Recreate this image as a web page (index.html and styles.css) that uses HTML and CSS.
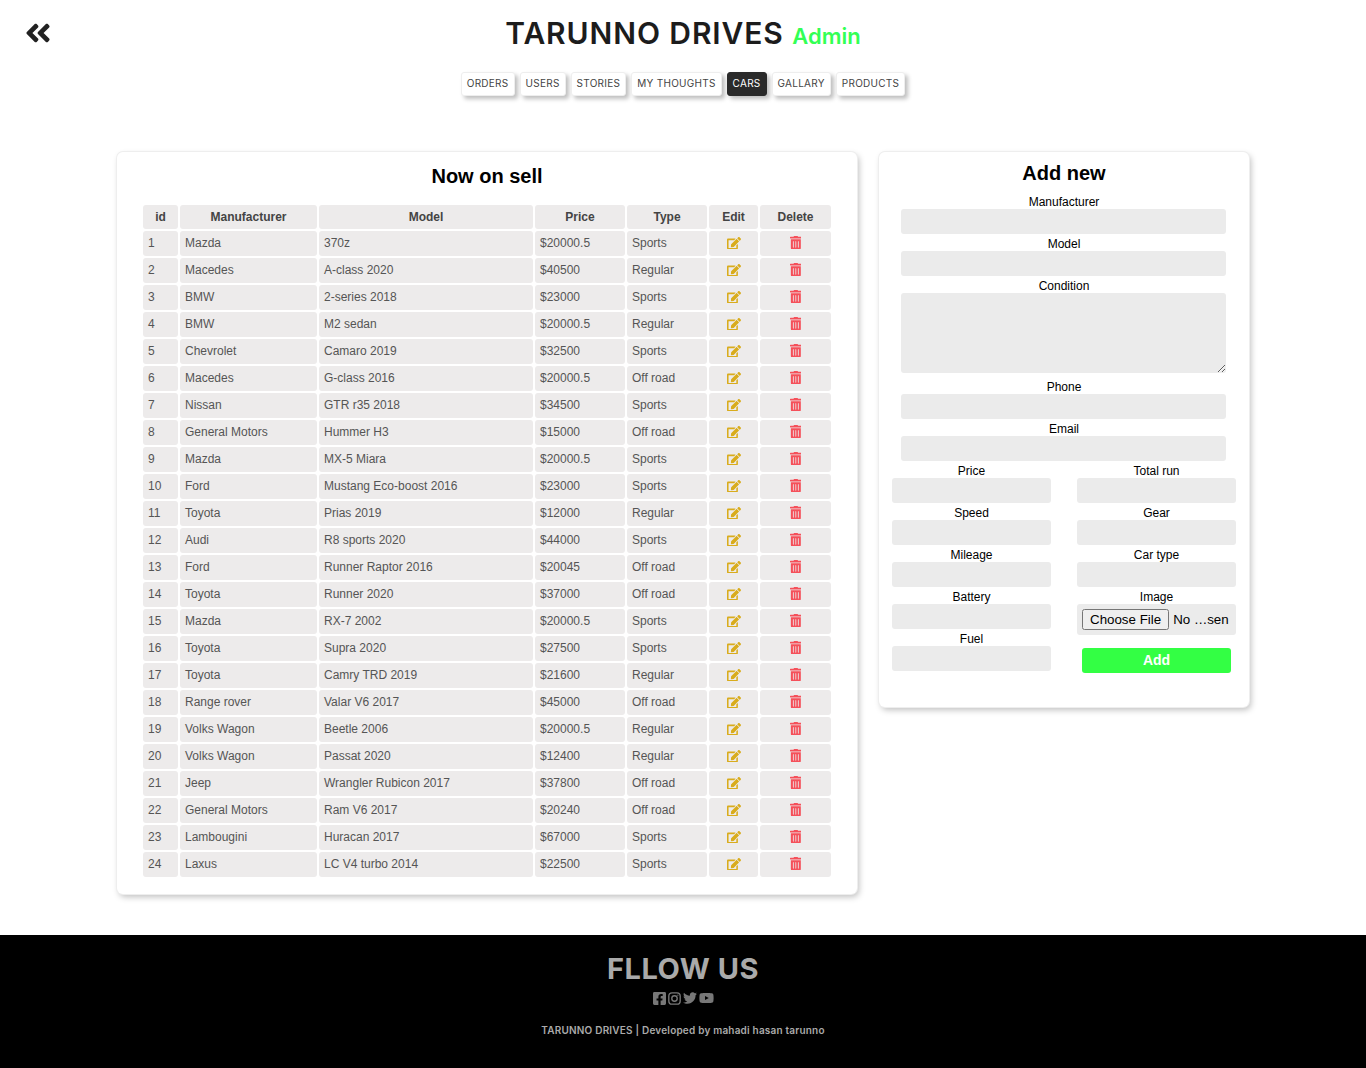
FILE: index.html
```html
<!doctype html>
<html>
<head>
	<title>Cars | Tarunno Drives Admin</title>
	<meta charset="utf-8">
	<link rel="stylesheet" href="styles.css">
</head>

<body>
	<svg class="sprite" xmlns="http://www.w3.org/2000/svg">
		<symbol id="i-edit" viewBox="0 0 576 512"><path d="M402.6 83.2l90.2 90.2c3.8 3.8 3.8 10 0 13.8L274.4 405.6l-92.8 10.3c-12.4 1.4-22.9-9.1-21.5-21.5l10.3-92.8L388.8 83.2c3.8-3.8 10-3.8 13.8 0zm162-22.9l-48.8-48.8c-15.2-15.2-39.9-15.2-55.2 0l-35.4 35.4c-3.8 3.8-3.8 10 0 13.8l90.2 90.2c3.8 3.8 10 3.8 13.8 0l35.4-35.4c15.2-15.3 15.2-40 0-55.2zM384 346.2V448H64V128h229.8c3.2 0 6.2-1.3 8.5-3.5l40-40c7.6-7.6 2.2-20.5-8.5-20.5H48C21.5 64 0 85.5 0 112v352c0 26.5 21.5 48 48 48h352c26.5 0 48-21.5 48-48V306.2c0-10.7-12.9-16-20.5-8.5l-40 40c-2.2 2.3-3.5 5.3-3.5 8.5z"/></symbol>
		<symbol id="i-trash" viewBox="0 0 448 512"><path d="M32 464a48 48 0 0 0 48 48h288a48 48 0 0 0 48-48V128H32zm272-256a16 16 0 0 1 32 0v224a16 16 0 0 1-32 0zm-96 0a16 16 0 0 1 32 0v224a16 16 0 0 1-32 0zm-96 0a16 16 0 0 1 32 0v224a16 16 0 0 1-32 0zM432 32H312l-9.4-18.7A24 24 0 0 0 281.1 0H166.8a23.72 23.72 0 0 0-21.4 13.3L136 32H16A16 16 0 0 0 0 48v32a16 16 0 0 0 16 16h416a16 16 0 0 0 16-16V48a16 16 0 0 0-16-16z"/></symbol>
	</svg>

	<header class="top">
		<a href="#" class="back" aria-label="Back">
			<svg viewBox="0 0 448 512" width="26" height="30"><path d="M223.7 239l136-136c9.4-9.4 24.6-9.4 33.9 0l22.6 22.6c9.4 9.4 9.4 24.6 0 33.9L319.9 256l96.4 96.4c9.4 9.4 9.4 24.6 0 33.9L393.7 409c-9.4 9.4-24.6 9.4-33.9 0l-136-136c-9.5-9.4-9.5-24.6-.1-34zm-192 34l136 136c9.4 9.4 24.6 9.4 33.9 0l22.6-22.6c9.4-9.4 9.4-24.6 0-33.9L127.9 256l96.4-96.4c9.4-9.4 9.4-24.6 0-33.9L201.7 103c-9.4-9.4-24.6-9.4-33.9 0l-136 136c-9.5 9.4-9.5 24.6-.1 34z"/></svg>
		</a>
		<h1 class="brand">TARUNNO DRIVES <span class="brand-role">Admin</span></h1>
		<nav class="tabs">
			<a href="#" class="tab">ORDERS</a>
			<a href="#" class="tab">USERS</a>
			<a href="#" class="tab">STORIES</a>
			<a href="#" class="tab">MY THOUGHTS</a>
			<a href="#" class="tab tab-active">CARS</a>
			<a href="#" class="tab">GALLARY</a>
			<a href="#" class="tab">PRODUCTS</a>
		</nav>
	</header>

	<main class="panels">
		<section class="card card-list">
			<h2 class="card-title">Now on sell</h2>
			<table class="cars">
				<colgroup>
					<col class="col-id"><col class="col-maker"><col class="col-model"><col class="col-price"><col class="col-type"><col class="col-edit"><col class="col-del">
				</colgroup>
				<thead>
					<tr><th>id</th><th>Manufacturer</th><th>Model</th><th>Price</th><th>Type</th><th>Edit</th><th>Delete</th></tr>
				</thead>
				<tbody>
					<tr><td>1</td><td>Mazda</td><td>370z</td><td>$20000.5</td><td>Sports</td><td class="op"><svg class="ic-edit"><use href="#i-edit"/></svg></td><td class="op"><svg class="ic-trash"><use href="#i-trash"/></svg></td></tr>
					<tr><td>2</td><td>Macedes</td><td>A-class 2020</td><td>$40500</td><td>Regular</td><td class="op"><svg class="ic-edit"><use href="#i-edit"/></svg></td><td class="op"><svg class="ic-trash"><use href="#i-trash"/></svg></td></tr>
					<tr><td>3</td><td>BMW</td><td>2-series 2018</td><td>$23000</td><td>Sports</td><td class="op"><svg class="ic-edit"><use href="#i-edit"/></svg></td><td class="op"><svg class="ic-trash"><use href="#i-trash"/></svg></td></tr>
					<tr><td>4</td><td>BMW</td><td>M2 sedan</td><td>$20000.5</td><td>Regular</td><td class="op"><svg class="ic-edit"><use href="#i-edit"/></svg></td><td class="op"><svg class="ic-trash"><use href="#i-trash"/></svg></td></tr>
					<tr><td>5</td><td>Chevrolet</td><td>Camaro 2019</td><td>$32500</td><td>Sports</td><td class="op"><svg class="ic-edit"><use href="#i-edit"/></svg></td><td class="op"><svg class="ic-trash"><use href="#i-trash"/></svg></td></tr>
					<tr><td>6</td><td>Macedes</td><td>G-class 2016</td><td>$20000.5</td><td>Off road</td><td class="op"><svg class="ic-edit"><use href="#i-edit"/></svg></td><td class="op"><svg class="ic-trash"><use href="#i-trash"/></svg></td></tr>
					<tr><td>7</td><td>Nissan</td><td>GTR r35 2018</td><td>$34500</td><td>Sports</td><td class="op"><svg class="ic-edit"><use href="#i-edit"/></svg></td><td class="op"><svg class="ic-trash"><use href="#i-trash"/></svg></td></tr>
					<tr><td>8</td><td>General Motors</td><td>Hummer H3</td><td>$15000</td><td>Off road</td><td class="op"><svg class="ic-edit"><use href="#i-edit"/></svg></td><td class="op"><svg class="ic-trash"><use href="#i-trash"/></svg></td></tr>
					<tr><td>9</td><td>Mazda</td><td>MX-5 Miara</td><td>$20000.5</td><td>Sports</td><td class="op"><svg class="ic-edit"><use href="#i-edit"/></svg></td><td class="op"><svg class="ic-trash"><use href="#i-trash"/></svg></td></tr>
					<tr><td>10</td><td>Ford</td><td>Mustang Eco-boost 2016</td><td>$23000</td><td>Sports</td><td class="op"><svg class="ic-edit"><use href="#i-edit"/></svg></td><td class="op"><svg class="ic-trash"><use href="#i-trash"/></svg></td></tr>
					<tr><td>11</td><td>Toyota</td><td>Prias 2019</td><td>$12000</td><td>Regular</td><td class="op"><svg class="ic-edit"><use href="#i-edit"/></svg></td><td class="op"><svg class="ic-trash"><use href="#i-trash"/></svg></td></tr>
					<tr><td>12</td><td>Audi</td><td>R8 sports 2020</td><td>$44000</td><td>Sports</td><td class="op"><svg class="ic-edit"><use href="#i-edit"/></svg></td><td class="op"><svg class="ic-trash"><use href="#i-trash"/></svg></td></tr>
					<tr><td>13</td><td>Ford</td><td>Runner Raptor 2016</td><td>$20045</td><td>Off road</td><td class="op"><svg class="ic-edit"><use href="#i-edit"/></svg></td><td class="op"><svg class="ic-trash"><use href="#i-trash"/></svg></td></tr>
					<tr><td>14</td><td>Toyota</td><td>Runner 2020</td><td>$37000</td><td>Off road</td><td class="op"><svg class="ic-edit"><use href="#i-edit"/></svg></td><td class="op"><svg class="ic-trash"><use href="#i-trash"/></svg></td></tr>
					<tr><td>15</td><td>Mazda</td><td>RX-7 2002</td><td>$20000.5</td><td>Sports</td><td class="op"><svg class="ic-edit"><use href="#i-edit"/></svg></td><td class="op"><svg class="ic-trash"><use href="#i-trash"/></svg></td></tr>
					<tr><td>16</td><td>Toyota</td><td>Supra 2020</td><td>$27500</td><td>Sports</td><td class="op"><svg class="ic-edit"><use href="#i-edit"/></svg></td><td class="op"><svg class="ic-trash"><use href="#i-trash"/></svg></td></tr>
					<tr><td>17</td><td>Toyota</td><td>Camry TRD 2019</td><td>$21600</td><td>Regular</td><td class="op"><svg class="ic-edit"><use href="#i-edit"/></svg></td><td class="op"><svg class="ic-trash"><use href="#i-trash"/></svg></td></tr>
					<tr><td>18</td><td>Range rover</td><td>Valar V6 2017</td><td>$45000</td><td>Off road</td><td class="op"><svg class="ic-edit"><use href="#i-edit"/></svg></td><td class="op"><svg class="ic-trash"><use href="#i-trash"/></svg></td></tr>
					<tr><td>19</td><td>Volks Wagon</td><td>Beetle 2006</td><td>$20000.5</td><td>Regular</td><td class="op"><svg class="ic-edit"><use href="#i-edit"/></svg></td><td class="op"><svg class="ic-trash"><use href="#i-trash"/></svg></td></tr>
					<tr><td>20</td><td>Volks Wagon</td><td>Passat 2020</td><td>$12400</td><td>Regular</td><td class="op"><svg class="ic-edit"><use href="#i-edit"/></svg></td><td class="op"><svg class="ic-trash"><use href="#i-trash"/></svg></td></tr>
					<tr><td>21</td><td>Jeep</td><td>Wrangler Rubicon 2017</td><td>$37800</td><td>Off road</td><td class="op"><svg class="ic-edit"><use href="#i-edit"/></svg></td><td class="op"><svg class="ic-trash"><use href="#i-trash"/></svg></td></tr>
					<tr><td>22</td><td>General Motors</td><td>Ram V6 2017</td><td>$20240</td><td>Off road</td><td class="op"><svg class="ic-edit"><use href="#i-edit"/></svg></td><td class="op"><svg class="ic-trash"><use href="#i-trash"/></svg></td></tr>
					<tr><td>23</td><td>Lambougini</td><td>Huracan 2017</td><td>$67000</td><td>Sports</td><td class="op"><svg class="ic-edit"><use href="#i-edit"/></svg></td><td class="op"><svg class="ic-trash"><use href="#i-trash"/></svg></td></tr>
					<tr><td>24</td><td>Laxus</td><td>LC V4 turbo 2014</td><td>$22500</td><td>Sports</td><td class="op"><svg class="ic-edit"><use href="#i-edit"/></svg></td><td class="op"><svg class="ic-trash"><use href="#i-trash"/></svg></td></tr>
				</tbody>
			</table>
		</section>

		<section class="card card-form">
			<h2 class="card-title card-title-form">Add new</h2>
			<form class="car-form">
				<label class="field">Manufacturer<input type="text" class="input input-wide"></label>
				<label class="field">Model<input type="text" class="input input-wide"></label>
				<label class="field">Condition<textarea class="input input-wide input-area"></textarea></label>
				<label class="field">Phone<input type="text" class="input input-wide"></label>
				<label class="field">Email<input type="text" class="input input-wide"></label>
				<div class="split">
					<div class="split-col">
						<label class="field">Price<input type="text" class="input"></label>
						<label class="field">Speed<input type="text" class="input"></label>
						<label class="field">Mileage<input type="text" class="input"></label>
						<label class="field">Battery<input type="text" class="input"></label>
						<label class="field">Fuel<input type="text" class="input"></label>
					</div>
					<div class="split-col">
						<label class="field">Total run<input type="text" class="input"></label>
						<label class="field">Gear<input type="text" class="input"></label>
						<label class="field">Car type<input type="text" class="input"></label>
						<label class="field">Image<input type="file" class="input input-file"></label>
						<button type="button" class="btn-add">Add</button>
					</div>
				</div>
			</form>
		</section>
	</main>

	<footer class="foot">
		<h2 class="foot-title">FLLOW US</h2>
		<div class="foot-social">
			<svg viewBox="0 0 448 512" width="13" height="15"><path d="M400 32H48A48 48 0 0 0 0 80v352a48 48 0 0 0 48 48h137.25V327.69h-63V256h63v-54.64c0-62.15 37-96.48 93.67-96.48 27.14 0 55.52 4.84 55.52 4.84v61h-31.27c-30.81 0-40.42 19.12-40.42 38.73V256h68.78l-11 71.69h-57.78V480H400a48 48 0 0 0 48-48V80a48 48 0 0 0-48-48z"/></svg>
			<svg viewBox="0 0 24 24" width="13" height="13" class="ic-insta"><rect x="1.5" y="1.5" width="21" height="21" rx="6"/><circle cx="12" cy="12" r="5"/><circle cx="18.2" cy="5.8" r="1.2" class="ic-insta-dot"/></svg>
			<svg viewBox="0 0 512 512" width="14" height="14"><path d="M459.37 151.716c.325 4.548.325 9.097.325 13.645 0 138.72-105.583 298.558-298.558 298.558-59.452 0-114.68-17.219-161.137-47.106 8.447.974 16.568 1.299 25.34 1.299 49.055 0 94.213-16.568 130.274-44.832-46.132-.975-84.792-31.188-98.112-72.772 6.498.974 12.995 1.624 19.818 1.624 9.421 0 18.843-1.3 27.614-3.573-48.081-9.747-84.143-51.98-84.143-102.985v-1.299c13.969 7.797 30.214 12.67 47.431 13.319-28.264-18.843-46.781-51.005-46.781-87.391 0-19.492 5.197-37.36 14.294-52.954 51.655 63.675 129.3 105.258 216.365 109.807-1.624-7.797-2.599-15.918-2.599-24.04 0-57.828 46.782-104.934 104.934-104.934 30.213 0 57.502 12.67 76.67 33.137 23.715-4.548 46.456-13.32 66.599-25.34-7.798 24.366-24.366 44.833-46.132 57.827 21.117-2.273 41.584-8.122 60.426-16.243-14.292 20.791-32.161 39.308-52.628 54.253z"/></svg>
			<svg viewBox="0 0 576 512" width="15" height="14"><path d="M549.655 124.083c-6.281-23.65-24.787-42.276-48.284-48.597C458.781 64 288 64 288 64S117.22 64 74.629 75.486c-23.497 6.322-42.003 24.947-48.284 48.597-11.412 42.867-11.412 132.305-11.412 132.305s0 89.438 11.412 132.305c6.281 23.65 24.787 41.5 48.284 47.821C117.22 448 288 448 288 448s170.78 0 213.371-11.486c23.497-6.321 42.003-24.171 48.284-47.821 11.412-42.867 11.412-132.305 11.412-132.305s0-89.438-11.412-132.305zm-317.51 213.508V175.185l142.739 81.205-142.739 81.201z"/></svg>
		</div>
		<p class="foot-copy">TARUNNO DRIVES | Developed by mahadi hasan tarunno</p>
	</footer>
</body>
</html>
```

FILE: styles.css
```css
body, h1, h2, p {
	padding: 0;
	margin: 0;
}
body {
	font-family: "Liberation Sans", Arial, sans-serif;
	font-size: 12px;
	background: #fff;
	color: #000;
}
.sprite {
	display: none;
}

.top {
	position: relative;
	padding-top: 14px;
	text-align: center;
}
.back {
	position: absolute;
	left: 25px;
	top: 18px;
	color: #222;
}
.back svg {
	display: block;
	fill: currentColor;
}
.brand {
	height: 38px;
	line-height: 38px;
	font-family: Inter, sans-serif;
	font-size: 30px;
	font-weight: 600;
	letter-spacing: .9px;
	color: #1c1c1c;
}
.brand-role {
	font-size: 22px;
	font-weight: 600;
	letter-spacing: 0;
	color: #3f5;
}
.tabs {
	display: flex;
	justify-content: center;
	gap: 5px;
	margin-top: 20px;
}
.tab {
	height: 24px;
	padding: 0 5px;
	box-sizing: border-box;
	line-height: 20px;
	font-family: Inter, sans-serif;
	font-size: 10px;
	letter-spacing: .27px;
	text-decoration: none;
	color: #444;
	background: #fff;
	border: 1px solid #eee;
	border-radius: 3px;
	box-shadow: 3px 3px 4px rgba(0,0,0,.25);
}
.tab-active {
	color: #fff;
	background: #2a2a2a;
	border-color: #2a2a2a;
}

.panels {
	display: flex;
	justify-content: center;
	align-items: flex-start;
	gap: 22px;
	padding: 56px 0 41px;
}
.card {
	box-sizing: border-box;
	background: #fff;
	border-radius: 6px;
	box-shadow: 0 0 0 1px #eee, 2px 3px 6px rgba(0,0,0,.25);
}
.card-list {
	width: 740px;
	padding: 13px 24px 15px;
}
.card-form {
	width: 370px;
	height: 555px;
	padding-top: 10px;
}
.card-title {
	height: 23px;
	line-height: 23px;
	margin-bottom: 15px;
	font-size: 20px;
	text-align: center;
}
.card-title-form {
	margin-bottom: 7px;
}

.cars {
	width: 692px;
	table-layout: fixed;
	border-collapse: separate;
	border-spacing: 2px;
	color: #555;
}
.col-id { width: 35px; }
.col-maker { width: 137px; }
.col-model { width: 214px; }
.col-price { width: 90px; }
.col-type { width: 80px; }
.col-edit { width: 49px; }
.col-del { width: 71px; }
.cars th, .cars td {
	box-sizing: border-box;
	padding: 0 5px;
	background: #edebeb;
	border-radius: 3px;
}
.cars th {
	height: 24px;
	color: #444;
}
.cars td {
	height: 25px;
	padding-bottom: 2px;
}
.cars .op {
	padding: 0 0 3px;
	text-align: center;
}
.op svg {
	display: inline-block;
	vertical-align: middle;
}
.ic-edit {
	width: 14px;
	height: 12.5px;
	fill: #d9ac1c;
}
.ic-trash {
	width: 11.67px;
	height: 13.33px;
	fill: #f5505a;
}

.field {
	display: block;
	line-height: 20px;
	text-align: center;
}
.input {
	display: block;
	box-sizing: border-box;
	width: 159px;
	height: 25px;
	margin: -3px auto 0;
	padding: 0 5px;
	background: #ebebeb;
	border: 0;
	border-radius: 3px;
}
.input-wide {
	width: 325px;
	margin-left: 22px;
}
.input-area {
	height: 80px;
	margin-bottom: 4px;
	resize: vertical;
}
.input-file {
	height: 31px;
	padding: 5px;
	font-family: "Liberation Sans", Arial, sans-serif;
	font-size: 13.33px;
}
.split {
	display: flex;
}
.split-col {
	flex: 1;
}
.btn-add {
	display: block;
	width: 149px;
	height: 25px;
	margin: 13px auto 0;
	padding: 0 0 2px;
	font-family: "Liberation Sans", Arial, sans-serif;
	font-size: 14px;
	font-weight: bold;
	color: #fff;
	background: #3f4;
	border: 0;
	border-radius: 3px;
}

.foot {
	height: 133px;
	box-sizing: border-box;
	padding-top: 16px;
	text-align: center;
	background: #000;
	color: #aaa;
}
.foot-title {
	height: 36px;
	line-height: 36px;
	font-family: Inter, sans-serif;
	font-size: 29px;
	font-weight: 700;
	letter-spacing: .5px;
}
.foot-social {
	display: flex;
	justify-content: center;
	align-items: center;
	gap: 2px;
	height: 14px;
	margin-top: 4px;
}
.foot-social svg {
	fill: #777;
}
.foot .ic-insta {
	fill: none;
	stroke: #777;
	stroke-width: 2.5;
}
.foot .ic-insta-dot {
	fill: #777;
	stroke: none;
}
.foot-copy {
	margin-top: 19px;
	font-family: Inter, sans-serif;
	font-size: 10px;
	font-weight: 600;
	letter-spacing: .2px;
}
```
